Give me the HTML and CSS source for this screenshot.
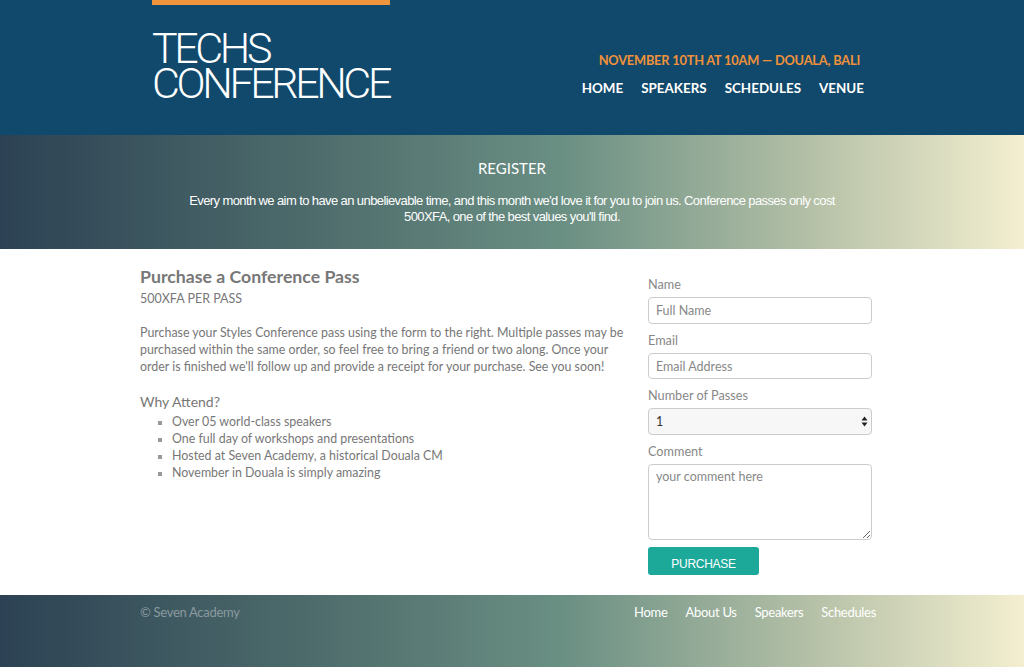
FILE: index.html
```html
<!DOCTYPE html>
<html>
<head>
<meta charset="utf-8">
<link rel="stylesheet" href="styles.css">
</head>
<body>
<header class="site-header">
  <div class="header-inner">
    <div class="logo">
      <span class="logo-line">TECHS</span>
      <span class="logo-line">CONFERENCE</span>
    </div>
    <div class="header-right">
      <p class="date">NOVEMBER 10TH AT 10AM — DOUALA, BALI</p>
      <nav class="main-nav">
        <a href="#">HOME</a>
        <a href="#">SPEAKERS</a>
        <a href="#">SCHEDULES</a>
        <a href="#">VENUE</a>
      </nav>
    </div>
  </div>
</header>

<section class="banner">
  <h2 class="banner-title">REGISTER</h2>
  <p class="banner-text">Every month we aim to have an unbelievable time, and this month we'd love it for you to join us. Conference passes only cost 500XFA, one of the best values you'll find.</p>
</section>

<main class="content">
  <div class="info">
    <h1 class="info-title">Purchase a Conference Pass</h1>
    <p class="info-sub">500XFA PER PASS</p>
    <p class="info-text">Purchase your Styles Conference pass using the form to the right. Multiple passes may be purchased within the same order, so feel free to bring a friend or two along. Once your order is finished we'll follow up and provide a receipt for your purchase. See you soon!</p>
    <h3 class="why">Why Attend?</h3>
    <ul class="reasons">
      <li>Over 05 world-class speakers</li>
      <li>One full day of workshops and presentations</li>
      <li>Hosted at Seven Academy, a historical Douala CM</li>
      <li>November in Douala is simply amazing</li>
    </ul>
  </div>
  <form class="form">
    <label class="lbl">Name</label>
    <input class="field" type="text" placeholder="Full Name">
    <label class="lbl">Email</label>
    <input class="field" type="email" placeholder="Email Address">
    <label class="lbl">Number of Passes</label>
    <div class="select">
      <span>1</span>
      <svg class="arrows" width="7" height="11" viewBox="0 0 7 11"><path d="M3.5 0.5 L6.5 4.5 L0.5 4.5 Z M3.5 10.5 L6.5 6.5 L0.5 6.5 Z" fill="#222"/></svg>
    </div>
    <label class="lbl">Comment</label>
    <textarea class="area" placeholder="your comment here"></textarea>
    <button class="btn" type="button">PURCHASE</button>
  </form>
</main>

<footer class="site-footer">
  <span class="copy">© Seven Academy</span>
  <nav class="foot-nav">
    <a href="#">Home</a>
    <a href="#">About Us</a>
    <a href="#">Speakers</a>
    <a href="#">Schedules</a>
  </nav>
</footer>
</body>
</html>
```

FILE: styles.css
```css
* { box-sizing: border-box; }
html, body { margin: 0; padding: 0; }
body { font-family: Lato, "Open Sans", sans-serif; color: #777; background: #fff; }

.site-header { background: #10496b; height: 135px; }
.header-inner { margin-left: 152px; width: 712px; display: flex; justify-content: space-between; }
.logo { border-top: 5px solid #f0953b; width: 238px; padding-top: 26px; display: flex; flex-direction: column; }
.logo-line { font-family: Roboto, "Liberation Sans", sans-serif; font-weight: 300; color: #fff; font-size: 43px; line-height: 35px; letter-spacing: -3.4px; white-space: nowrap; }
.header-right { padding-top: 52px; text-align: right; }
.date { margin: 0; color: #f0913a; font-weight: 700; font-size: 12.8px; line-height: 16px; padding-right: 4px; letter-spacing: -0.2px; }
.main-nav { margin-top: 12px; display: flex; gap: 18px; justify-content: flex-end; }
.main-nav a { color: #fff; text-decoration: none; font-weight: 700; font-size: 13.4px; line-height: 16px; }

.banner { height: 114px; background: linear-gradient(to right, #2c4254 0%, #4d6b6b 30%, #6a8f83 55%, #b7c2a8 80%, #f4efd0 100%); text-align: center; padding-top: 24px; color: #fff; }
.banner-title { margin: 0; font-family: Lato, sans-serif; font-weight: 400; font-size: 15px; line-height: 18px; }
.banner-text { margin: 16px auto 0; width: 660px; font-family: "Liberation Sans", Arial, sans-serif; font-size: 13px; line-height: 16px; letter-spacing: -0.6px; }

.content { display: flex; justify-content: space-between; padding: 18px 152px 20px 140px; height: 346px; }
.info { width: 490px; }
.info-title { margin: 0; font-size: 17.7px; line-height: 20px; font-weight: 700; color: #777; }
.info-sub { margin: 3px 0 0; font-size: 12.5px; line-height: 18px; }
.info-text { margin: 16px 0 0; font-size: 12.4px; line-height: 17px; }
.why { margin: 17px 0 0; font-weight: 400; font-size: 14px; line-height: 20px; }
.reasons { margin: 1px 0 0; padding-left: 32px; list-style: square; font-size: 12.4px; line-height: 17px; }
.reasons li::marker { color: #999; font-size: 11px; }

.form { width: 224px; display: flex; flex-direction: column; margin-top: 9px; }
.lbl { font-size: 12.7px; line-height: 16px; margin: 8px 0 5px; color: #888; }
.lbl:first-child { margin-top: 0; }
.field, .select, .area { width: 224px; border: 1px solid #ccc; border-radius: 4px; font-family: Lato, sans-serif; font-size: 12.5px; color: #777; padding: 0 7px; }
.field { height: 27px; }
.field::placeholder, .area::placeholder { color: #888; }
.select { height: 27px; background: #f7f7f7; display: flex; align-items: center; justify-content: space-between; color: #333; padding-right: 3px; }
.area { height: 77px; padding-top: 4px; resize: vertical; }
.btn { margin-top: 7px; width: 111px; height: 28px; border: none; border-radius: 3px; background: #1ca99a; color: #fff; font-family: "Liberation Sans", Arial, sans-serif; font-size: 12px; letter-spacing: -0.3px; padding-top: 6px; }

.site-footer { height: 72px; background: linear-gradient(to right, #2c4254 0%, #4d6b6b 30%, #6a8f83 55%, #b7c2a8 80%, #f4efd0 100%); display: flex; justify-content: space-between; padding: 9px 148px 0 140px; }
.copy { font-size: 13px; line-height: 16px; color: #8a9aa0; letter-spacing: -0.3px; }
.foot-nav { display: flex; gap: 18px; }
.foot-nav a { color: #fff; text-decoration: none; font-size: 13px; line-height: 16px; letter-spacing: -0.3px; }
```
